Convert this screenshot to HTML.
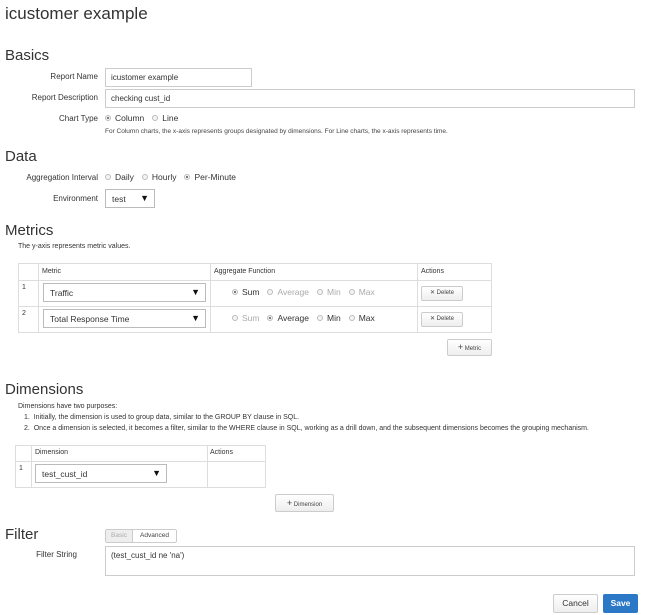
<!DOCTYPE html>
<html><head><meta charset="utf-8"><style>
*{box-sizing:border-box;margin:0;padding:0}
body{width:656px;height:615px;background:#fff;font-family:"Liberation Sans",Arial,sans-serif;color:#333;position:relative;overflow:hidden}
.a{position:absolute;white-space:nowrap}
h1,h2{position:absolute;font-weight:normal;color:#333;white-space:nowrap}
h1{font-size:17px;left:5px;top:4px}
h2{font-size:15px;left:5px}
.lbl{position:absolute;font-size:8px;text-align:right;white-space:nowrap}
.inp{position:absolute;border:1px solid #ccc;font-size:8px;padding:4px 5px;background:#fff}
.small{position:absolute;font-size:6.5px;color:#444;white-space:nowrap}
.txt{position:absolute;font-size:7.5px;color:#333;white-space:nowrap}
.r{display:inline-block;width:6px;height:6px;border:1px solid #bbb;border-radius:50%;vertical-align:middle;margin-right:4px;position:relative;top:-1px;background:#f4f4f4}
.r.on::after{content:"";position:absolute;left:1px;top:1px;width:2px;height:2px;border-radius:50%;background:#555}
.rg{position:absolute;font-size:8.5px;white-space:nowrap}
.rg span{margin-right:8px}
.dis{color:#aaa}
.sel{position:absolute;border:1px solid #bbb;font-size:8.5px;padding:4px 6px;background:#fff}
.sel::after{content:"▼";position:absolute;right:5px;top:3px;font-size:9px;color:#111}
.line{position:absolute;background:#ddd}
.btn{position:absolute;border:1px solid #ccc;border-radius:2px;background:linear-gradient(#fff,#eee);font-size:6px;text-align:center;color:#444}
</style></head><body>
<h1>icustomer example</h1>
<h2 style="top:47px">Basics</h2>
<div class="lbl" style="right:558px;top:72px">Report Name</div>
<div class="inp" style="left:105px;top:68px;width:147px;height:19px">icustomer example</div>
<div class="lbl" style="right:558px;top:93px">Report Description</div>
<div class="inp" style="left:105px;top:89px;width:530px;height:19px">checking cust_id</div>
<div class="lbl" style="right:558px;top:114px">Chart Type</div>
<div class="rg" style="left:105px;top:113px"><span><i class="r on"></i>Column</span><span><i class="r"></i>Line</span></div>
<div class="small" style="left:105px;top:128px">For Column charts, the x-axis represents groups designated by dimensions. For Line charts, the x-axis represents time.</div>

<h2 style="top:148px">Data</h2>
<div class="lbl" style="right:558px;top:173px">Aggregation Interval</div>
<div class="rg" style="left:105px;top:172px"><span><i class="r"></i>Daily</span><span><i class="r"></i>Hourly</span><span><i class="r on"></i>Per-Minute</span></div>
<div class="lbl" style="right:558px;top:194px">Environment</div>
<div class="sel" style="left:105px;top:189px;width:50px;height:19px">test</div>

<h2 style="top:222px">Metrics</h2>
<div class="txt" style="left:18px;top:243px;font-size:7px">The y-axis represents metric values.</div>
<div style="position:absolute;left:18px;top:263px;width:474px;height:70px;border:1px solid #ddd"></div>
<div class="line" style="left:18px;top:280px;width:474px;height:1px"></div>
<div class="line" style="left:18px;top:306px;width:474px;height:1px"></div>
<div class="line" style="left:38px;top:263px;width:1px;height:70px"></div>
<div class="line" style="left:210px;top:263px;width:1px;height:70px"></div>
<div class="line" style="left:417px;top:263px;width:1px;height:70px"></div>
<div class="txt" style="left:42px;top:268px;font-size:7px">Metric</div>
<div class="txt" style="left:214px;top:268px;font-size:7px">Aggregate Function</div>
<div class="txt" style="left:421px;top:268px;font-size:7px">Actions</div>
<div class="txt" style="left:22px;top:284px;font-size:7px">1</div>
<div class="txt" style="left:22px;top:310px;font-size:7px">2</div>
<div class="sel" style="left:43px;top:283px;width:163px;height:19px">Traffic</div>
<div class="sel" style="left:43px;top:309px;width:163px;height:19px">Total Response Time</div>
<div class="rg" style="left:232px;top:287px"><span><i class="r on"></i>Sum</span><span class="dis"><i class="r"></i>Average</span><span class="dis"><i class="r"></i>Min</span><span class="dis"><i class="r"></i>Max</span></div>
<div class="rg" style="left:232px;top:313px"><span class="dis"><i class="r"></i>Sum</span><span><i class="r on"></i>Average</span><span><i class="r"></i>Min</span><span><i class="r"></i>Max</span></div>
<div class="btn" style="left:421px;top:286px;width:42px;height:15px;line-height:13px">✕ Delete</div>
<div class="btn" style="left:421px;top:312px;width:42px;height:15px;line-height:13px">✕ Delete</div>
<div class="btn" style="left:447px;top:339px;width:45px;height:17px;line-height:15px"><b style="font-size:9px;font-weight:normal">+</b> Metric</div>

<h2 style="top:381px">Dimensions</h2>
<div class="txt" style="left:18px;top:403px;font-size:7px">Dimensions have two purposes:</div>
<div class="txt" style="left:24px;top:414px;font-size:7px">1.&nbsp; Initially, the dimension is used to group data, similar to the GROUP BY clause in SQL.</div>
<div class="txt" style="left:24px;top:425px;font-size:7px">2.&nbsp; Once a dimension is selected, it becomes a filter, similar to the WHERE clause in SQL, working as a drill down, and the subsequent dimensions becomes the grouping mechanism.</div>
<div style="position:absolute;left:15px;top:445px;width:251px;height:43px;border:1px solid #ddd"></div>
<div class="line" style="left:15px;top:461px;width:251px;height:1px"></div>
<div class="line" style="left:31px;top:445px;width:1px;height:43px"></div>
<div class="line" style="left:207px;top:445px;width:1px;height:43px"></div>
<div class="txt" style="left:35px;top:449px;font-size:7px">Dimension</div>
<div class="txt" style="left:210px;top:449px;font-size:7px">Actions</div>
<div class="txt" style="left:19px;top:465px;font-size:7px">1</div>
<div class="sel" style="left:35px;top:464px;width:132px;height:19px">test_cust_id</div>
<div class="btn" style="left:275px;top:494px;width:59px;height:18px;line-height:16px"><b style="font-size:9px;font-weight:normal">+</b> Dimension</div>

<h2 style="top:526px">Filter</h2>
<div style="position:absolute;left:105px;top:529px;width:72px;height:14px;border:1px solid #ccc;border-radius:2px;font-size:6.5px;display:flex">
<div style="width:27px;background:#eee;color:#aaa;text-align:center;line-height:12px;border-right:1px solid #ccc">Basic</div>
<div style="flex:1;text-align:center;line-height:12px;color:#444">Advanced</div></div>
<div class="lbl" style="right:579px;top:550px">Filter String</div>
<div class="inp" style="left:105px;top:546px;width:530px;height:30px">(test_cust_id ne 'na')</div>
<div class="btn" style="left:553px;top:594px;width:45px;height:19px;line-height:17px;font-size:8.5px;color:#333">Cancel</div>
<div style="position:absolute;left:603px;top:594px;width:35px;height:19px;border-radius:2px;background:#2a78c6;color:#fff;font-size:8.5px;font-weight:bold;text-align:center;line-height:19px">Save</div>
</body></html>
